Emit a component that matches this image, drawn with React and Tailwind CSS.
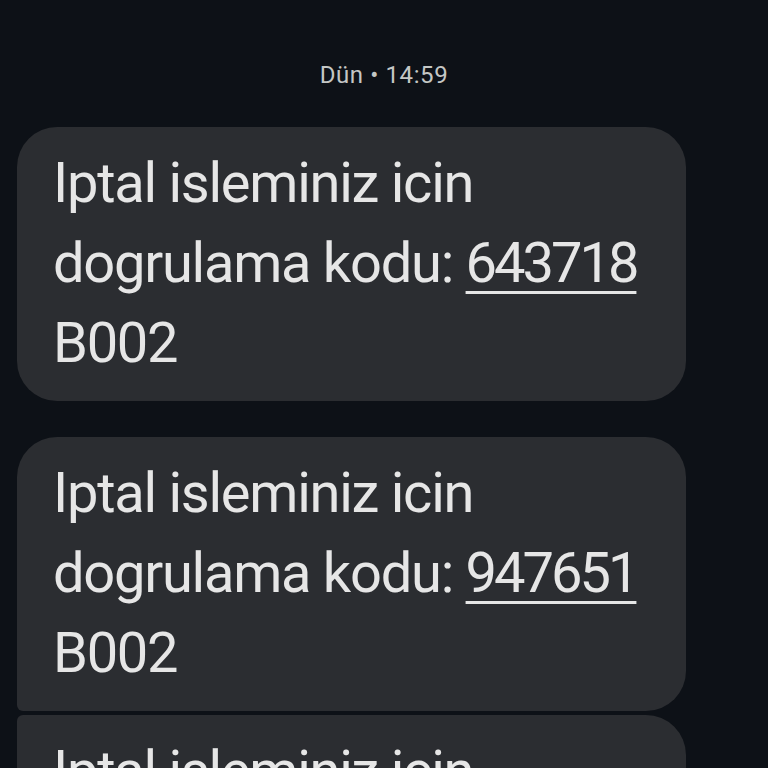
const messages = [
  { code: '643718', corners: 'rounded-[40px]', gap: 'mt-0' },
  { code: '947651', corners: 'rounded-[40px] rounded-bl-[6px]', gap: 'mt-9' },
  { code: '281934', corners: 'rounded-[40px] rounded-tl-[6px]', gap: 'mt-1' },
]

function Bubble({ code, corners, gap }) {
  return (
    <div className={`${gap} ml-[17px] w-[669px] bg-[#2b2d31] ${corners} pl-9 pr-4 pt-4 pb-[18px]`}>
      <p className="text-[56px] leading-[80px] text-[#e6e6e6] tracking-[-1.25px] whitespace-nowrap">
        Iptal isleminiz icin
        <br />
        dogrulama kodu:{' '}
        <span className="underline decoration-[3px] underline-offset-[9px] tracking-[-3px]">{code}</span>
        <br />
        B002
      </p>
    </div>
  )
}

export default function App() {
  return (
    <div
      className="h-[768px] overflow-hidden bg-[#0d1117]"
      style={{ fontFamily: 'Roboto, "Noto Sans", sans-serif' }}
    >
      <div className="pt-[59px] mb-9 text-center text-[24px] leading-[32px] tracking-[0.6px] text-[#c4c7c5]">
        Dün • 14:59
      </div>
      {messages.map((m) => (
        <Bubble key={m.code} {...m} />
      ))}
    </div>
  )
}
